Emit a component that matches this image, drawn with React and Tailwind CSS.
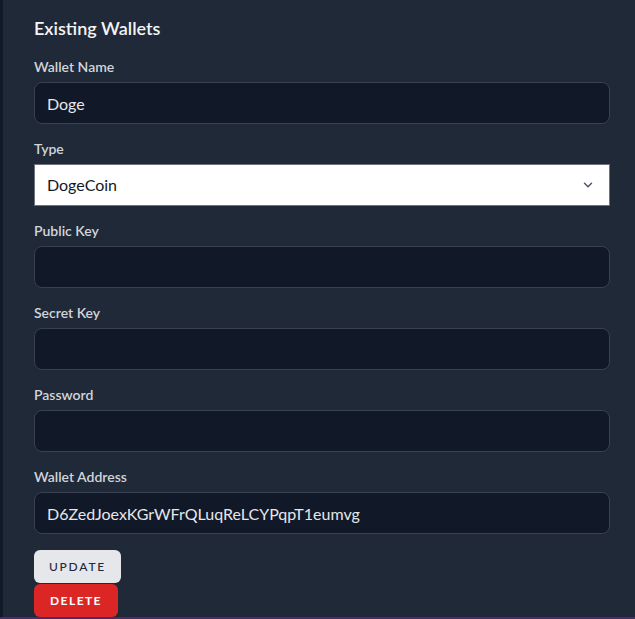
import React, { useState } from 'react';
import { ChevronDown } from 'lucide-react';

const Field = ({ label, value, onChange }) => (
  <div className="mb-[15px]">
    <label className="block text-sm font-semibold text-[#d1d5db] mb-[5px]">{label}</label>
    <input
      type="text"
      value={value}
      onChange={onChange}
      className="block w-full h-[42px] px-3 rounded-lg bg-[#111827] border border-[#374151] text-[#e5e7eb] text-base outline-none"
    />
  </div>
);

const App = () => {
  const [name, setName] = useState('Doge');
  const [type, setType] = useState('DogeCoin');
  const [publicKey, setPublicKey] = useState('');
  const [secretKey, setSecretKey] = useState('');
  const [password, setPassword] = useState('');
  const [address, setAddress] = useState('D6ZedJoexKGrWFrQLuqReLCYPqpT1eumvg');

  return (
    <div className="min-h-[619px] flex flex-col bg-[#1f2937]" style={{ fontFamily: 'Lato, "Noto Sans", sans-serif' }}>
      <div className="flex-1 border-l-[3px] border-[#111827] pl-[31px] pr-[25px] pt-[14px]">
        <h2 className="text-lg font-semibold text-[#f3f4f6] mb-[15px]">Existing Wallets</h2>

        <Field label="Wallet Name" value={name} onChange={e => setName(e.target.value)} />

        {/* Type select */}
        <div className="mb-[15px]">
          <label className="block text-sm font-semibold text-[#d1d5db] mb-[5px]">Type</label>
          <div className="relative">
            <select
              value={type}
              onChange={e => setType(e.target.value)}
              className="block w-full h-[42px] pl-3 pr-10 appearance-none bg-white border border-[#6b7280] text-[#111827] text-base outline-none"
            >
              <option>DogeCoin</option>
              <option>Bitcoin</option>
              <option>Ethereum</option>
            </select>
            <ChevronDown className="absolute right-[15px] top-[14px] h-[14px] w-[14px] text-[#4b5563] pointer-events-none" strokeWidth={2.5} />
          </div>
        </div>

        <Field label="Public Key" value={publicKey} onChange={e => setPublicKey(e.target.value)} />
        <Field label="Secret Key" value={secretKey} onChange={e => setSecretKey(e.target.value)} />
        <Field label="Password" value={password} onChange={e => setPassword(e.target.value)} />
        <Field label="Wallet Address" value={address} onChange={e => setAddress(e.target.value)} />

        <div className="flex flex-col items-start pt-px">
          <button className="h-[33px] w-[87px] rounded-md bg-[#e5e7eb] text-[#1f2937] text-xs font-medium uppercase tracking-[0.15em]">
            Update
          </button>
          <button className="h-[33px] w-[84px] mt-px rounded-md bg-[#dc2626] text-white text-xs font-bold uppercase tracking-[0.12em]">
            Delete
          </button>
        </div>
      </div>
      <div className="h-[2px] bg-[#4a2c68]" />
    </div>
  );
};

export default App;
